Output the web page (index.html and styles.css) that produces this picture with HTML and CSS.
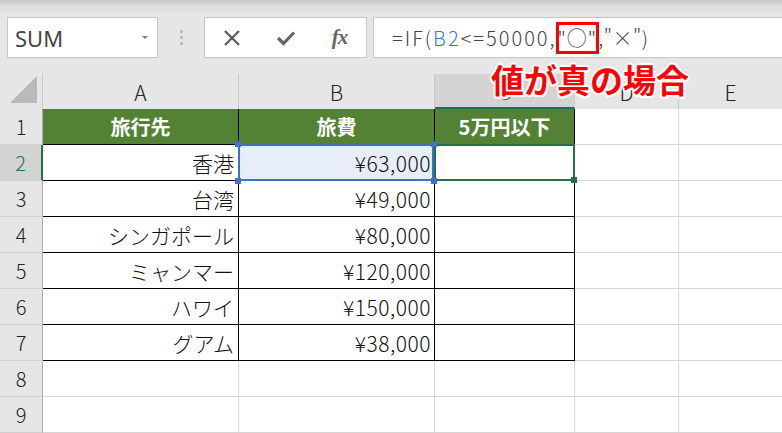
FILE: index.html
```html
<!DOCTYPE html>
<html lang="ja">
<head>
<meta charset="utf-8">
<link rel="stylesheet" href="styles.css">
</head>
<body>
<div class="ribbon">
  <div class="namebox"><span class="nm">SUM</span><span class="caret"></span></div>
  <div class="grip"><i></i><i></i><i></i></div>
  <div class="btns">
    <span class="btn"><svg width="18" height="18" viewBox="0 0 18 18"><path d="M2 2 L16 16 M16 2 L2 16" stroke="#595959" stroke-width="2.2" fill="none"/></svg></span>
    <span class="btn"><svg width="20" height="16" viewBox="0 0 20 16"><path d="M2 8 L7.5 13.5 L18 2.5" stroke="#666" stroke-width="3.2" fill="none"/></svg></span>
    <span class="btn fx">fx</span>
  </div>
  <div class="formula"><span>=IF(</span><span class="ref">B2</span><span>&lt;=50000,</span><span class="hl">"○"</span><span class="post">,"×")</span></div>
</div>
<div class="sheet">
  <div class="c corner"><svg width="30" height="30" viewBox="0 0 30 30"><path d="M1 28 L28 1 L28 28 Z" fill="#b9b9b9"/></svg></div>
  <div class="c ch">A</div>
  <div class="c ch">B</div>
  <div class="c ch selc">C</div>
  <div class="c ch">D</div>
  <div class="c ch">E</div>

  <div class="c rh">1</div>
  <div class="c t g">旅行先</div>
  <div class="c t g">旅費</div>
  <div class="c t g">5万円以下</div>
  <div class="c"></div>
  <div class="c"></div>

  <div class="c rh selr">2</div>
  <div class="c t">香港</div>
  <div class="c t n b2">¥63,000<span class="h h1"></span><span class="h h2"></span><span class="h h3"></span><span class="h h4"></span></div>
  <div class="c t c2"><span class="fill"></span></div>
  <div class="c"></div>
  <div class="c"></div>

  <div class="c rh">3</div>
  <div class="c t">台湾</div>
  <div class="c t n">¥49,000</div>
  <div class="c t"></div>
  <div class="c"></div>
  <div class="c"></div>

  <div class="c rh">4</div>
  <div class="c t">シンガポール</div>
  <div class="c t n">¥80,000</div>
  <div class="c t"></div>
  <div class="c"></div>
  <div class="c"></div>

  <div class="c rh">5</div>
  <div class="c t">ミャンマー</div>
  <div class="c t n">¥120,000</div>
  <div class="c t"></div>
  <div class="c"></div>
  <div class="c"></div>

  <div class="c rh">6</div>
  <div class="c t">ハワイ</div>
  <div class="c t n">¥150,000</div>
  <div class="c t"></div>
  <div class="c"></div>
  <div class="c"></div>

  <div class="c rh">7</div>
  <div class="c t">グアム</div>
  <div class="c t n">¥38,000</div>
  <div class="c t"></div>
  <div class="c"></div>
  <div class="c"></div>

  <div class="c rh">8</div>
  <div class="c"></div>
  <div class="c"></div>
  <div class="c"></div>
  <div class="c"></div>
  <div class="c"></div>

  <div class="c rh">9</div>
  <div class="c"></div>
  <div class="c"></div>
  <div class="c"></div>
  <div class="c"></div>
  <div class="c"></div>
</div>
<div class="note">値が真の場合</div>
</body>
</html>
```
FILE: styles.css
```css
body {
  margin: 0;
  width: 782px;
  height: 433px;
  overflow: hidden;
  position: relative;
  background: #e6e6e6;
  font-family: "Noto Sans CJK JP", "Noto Sans", sans-serif;
}
.ribbon {
  height: 74px;
  box-sizing: border-box;
  padding-top: 17px;
  display: flex;
  align-items: flex-start;
  background: linear-gradient(#c6c6c6 0px, #dcdcdc 6px, #e6e6e6 14px);
}
.namebox {
  flex: none;
  margin-left: 7px;
  width: 151px;
  height: 41px;
  box-sizing: border-box;
  border: 1px solid #c6c6c6;
  background: #fff;
  display: flex;
  align-items: center;
  padding-left: 7px;
}
.nm {
  font-family: "Noto Sans", sans-serif;
  font-size: 22px;
  color: #444;
  line-height: 1;
}
.caret {
  margin-left: auto;
  margin-right: 9px;
  width: 0;
  height: 0;
  border-left: 3px solid transparent;
  border-right: 3px solid transparent;
  border-top: 3px solid #7a7a7a;
}
.grip {
  flex: none;
  width: 46px;
  padding-top: 13px;
  display: flex;
  flex-direction: column;
  align-items: center;
  gap: 3px;
}
.grip i {
  display: block;
  width: 3px;
  height: 3px;
  background: #bdbdbd;
}
.btns {
  flex: none;
  width: 163px;
  height: 41px;
  box-sizing: border-box;
  border: 1px solid #c6c6c6;
  background: #fff;
  display: grid;
  grid-template-columns: 54px 54px 53px;
  align-items: center;
}
.btn {
  display: flex;
  justify-content: center;
  align-items: center;
}
.fx {
  font-family: "Liberation Serif", serif;
  font-style: italic;
  font-weight: bold;
  font-size: 21px;
  color: #666;
  letter-spacing: -1px;
}
.formula {
  flex: none;
  margin-left: 6px;
  width: 430px;
  height: 41px;
  box-sizing: border-box;
  border: 1px solid #c6c6c6;
  background: #fff;
  display: flex;
  align-items: center;
  padding-left: 18px;
  font-size: 20px;
  font-weight: 300;
  letter-spacing: 2px;
  color: #444;
  white-space: nowrap;
}
.ref { color: #3a78cf; }
.hl {
  display: inline-block;
  line-height: 28px;
  padding: 0;
  margin-left: 1px;
  letter-spacing: 1px;
  outline: 3px solid #f00;
  outline-offset: -1px;
}
.post {
  margin-left: 1px;
  letter-spacing: 0.5px;
}
.sheet {
  display: grid;
  grid-template-columns: 43px 196px 196px 140px 104px 104px;
  grid-template-rows: 35px repeat(9, 36px);
  background: #fff;
}
.c {
  box-sizing: border-box;
  border-right: 1px solid #d6d6d6;
  border-bottom: 1px solid #d6d6d6;
  display: flex;
  align-items: center;
  padding: 0 4px;
  font-size: 21px;
  font-weight: 300;
  color: #111;
  white-space: nowrap;
}
.n {
  letter-spacing: 0.5px;
  padding-right: 3px;
}
.corner {
  background: #e6e6e6;
  border-right-color: #c9c9c9;
  border-bottom: none;
  align-items: flex-end;
  justify-content: flex-end;
  padding: 0 3px 4px 0;
}
.ch {
  background: #e6e6e6;
  border-right-color: #c9c9c9;
  border-bottom: none;
  justify-content: center;
  color: #222;
}
.selc {
  background: #d3d3d3;
  border-bottom: 2px solid #217346;
  color: #217346;
}
.rh {
  background: #e6e6e6;
  border-right-color: #ababab;
  border-bottom-color: #cfcfcf;
  justify-content: center;
  font-size: 20px;
  color: #222;
}
.selr {
  background: #d3d3d3;
  border-right: 2px solid #217346;
  color: #217346;
}
.t {
  border-right-color: #000;
  border-bottom-color: #000;
  justify-content: flex-end;
}
.g {
  background: #548235;
  color: #fff;
  font-size: 20px;
  font-weight: bold;
  justify-content: center;
}
.b2 {
  position: relative;
  background: #e8eef9;
}
.b2::before {
  content: "";
  position: absolute;
  top: -1px;
  left: -1px;
  right: 0;
  bottom: -1px;
  border: 2px solid #3b74c6;
}
.h {
  position: absolute;
  width: 6px;
  height: 6px;
  background: #3b74c6;
  z-index: 3;
}
.h1 { left: -4px; top: -4px; }
.h2 { right: -3px; top: -4px; }
.h3 { left: -4px; bottom: -4px; }
.h4 { right: -3px; bottom: -4px; }
.c2 {
  position: relative;
}
.c2::before {
  content: "";
  position: absolute;
  top: -1px;
  left: -1px;
  right: -1px;
  bottom: -1px;
  border: 2px solid #217346;
  z-index: 1;
}
.fill {
  position: absolute;
  right: -3px;
  bottom: -3px;
  width: 6px;
  height: 6px;
  background: #217346;
  z-index: 2;
}
.note {
  position: absolute;
  left: 491px;
  top: 63px;
  font-size: 33px;
  font-weight: bold;
  line-height: 1;
  color: #f00;
  white-space: nowrap;
  text-shadow: 2px 0 0 #fff, -2px 0 0 #fff, 0 2px 0 #fff, 0 -2px 0 #fff,
    1.5px 1.5px 0 #fff, -1.5px 1.5px 0 #fff, 1.5px -1.5px 0 #fff, -1.5px -1.5px 0 #fff;
}
```
